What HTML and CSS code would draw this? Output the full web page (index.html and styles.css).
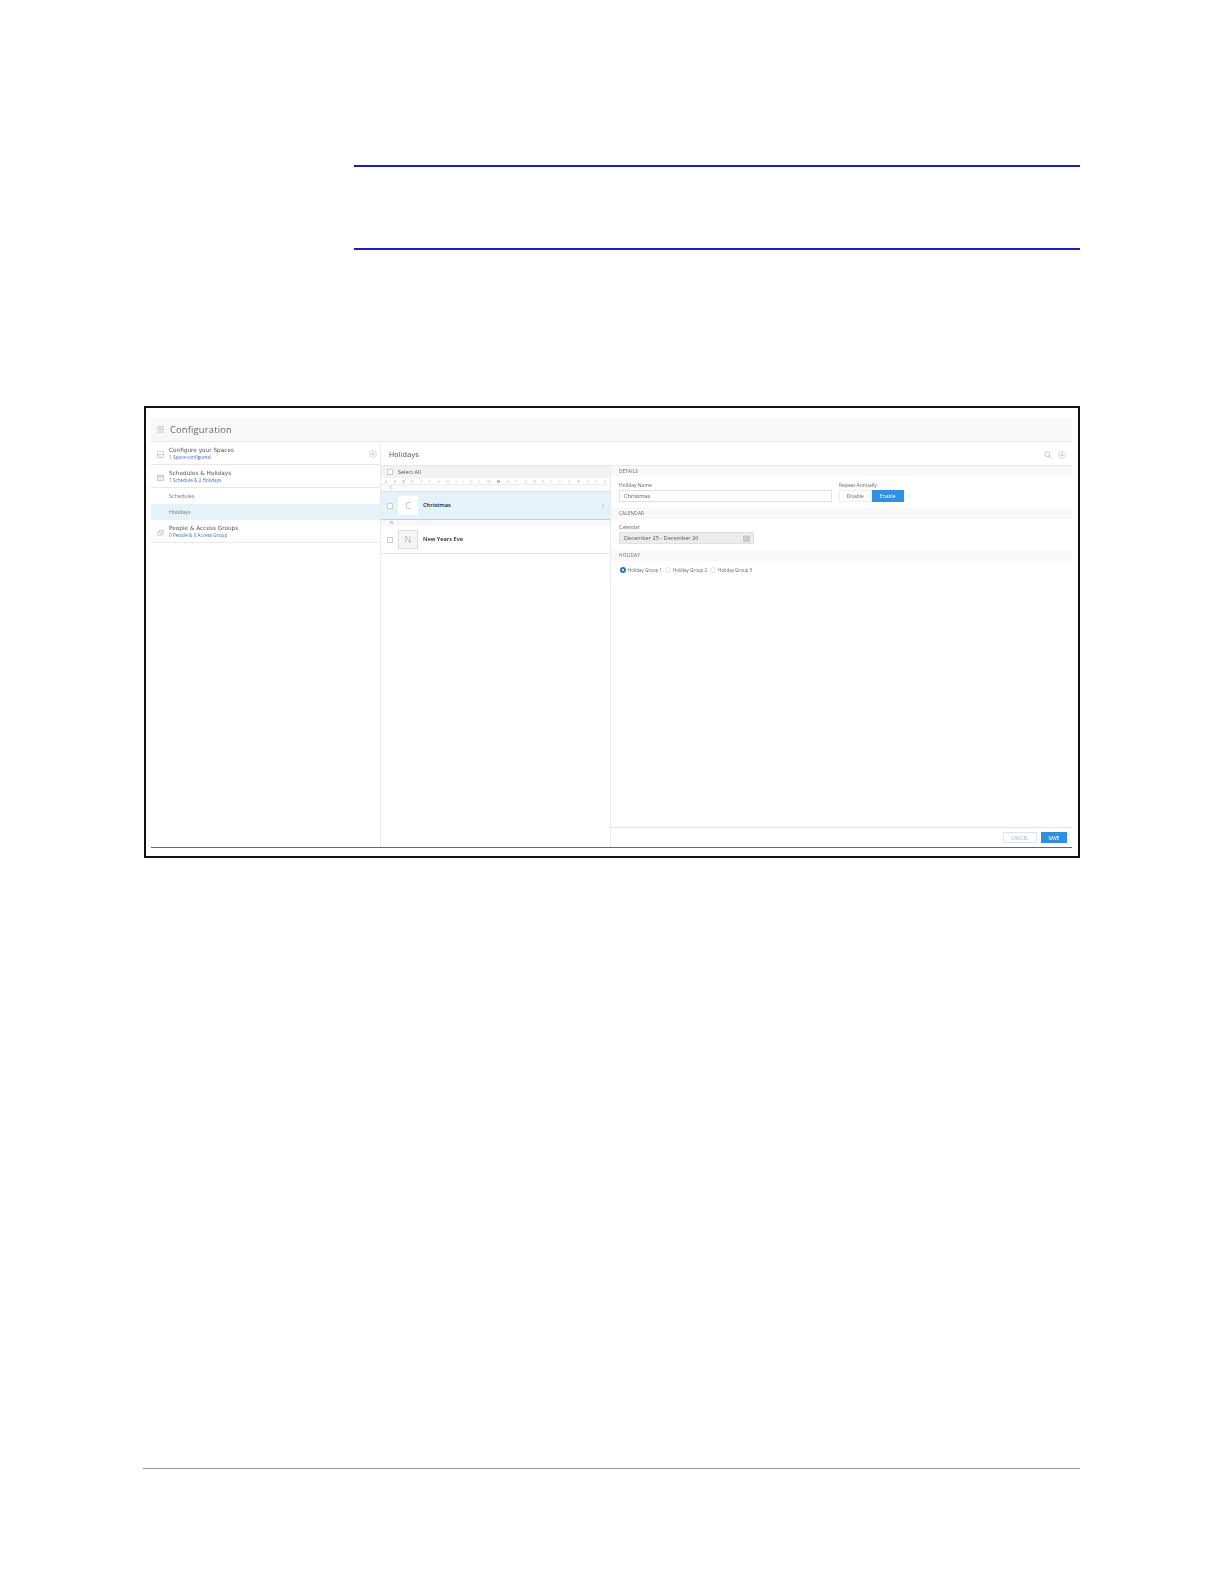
FILE: index.html
```html
<!DOCTYPE html>
<html lang="en">
<head>
<meta charset="utf-8">
<title>Holidays configuration</title>
<link rel="stylesheet" href="styles.css">
</head>
<body>
<div class="note"></div>
<figure class="shot">
  <div class="app">
    <header class="title-bar">
      <svg class="menu-ico" viewBox="0 0 8 8"><path d="M0 1h8M0 4h8M0 7h8" stroke="#ccc" stroke-width="1.6"/></svg>
      <span>Configuration</span>
    </header>
    <div class="columns">
      <nav class="side">
        <div class="nav-item">
          <svg class="nav-ico" viewBox="0 0 10 10"><path d="M.5.5h9v9h-9zM.5 5h4v4.500M6 5h3.500" fill="none" stroke="#aaa" stroke-width=".8"/></svg>
          <div class="nav-text"><b>Configure your Spaces</b><small>1 Space configured</small></div>
          <svg class="plus" viewBox="0 0 10 10"><circle cx="5" cy="5" r="4.400" fill="none" stroke="#bbb" stroke-width=".7"/><path d="M3 5h4M5 3v4" stroke="#999" stroke-width=".7"/></svg>
        </div>
        <div class="nav-item">
          <svg class="nav-ico" viewBox="0 0 10 10"><path d="M.5 1.500h9v8h-9z" fill="#eee" stroke="#aaa" stroke-width=".8"/><path d="M.5 3.500h9" stroke="#aaa" stroke-width=".8"/></svg>
          <div class="nav-text"><b>Schedules &amp; Holidays</b><small>1 Schedule &amp; 2 Holidays</small></div>
        </div>
        <div class="sub">Schedules</div>
        <div class="sub sub-active">Holidays</div>
        <div class="nav-item">
          <svg class="nav-ico" viewBox="0 0 10 10"><path d="M.5 9V4.500h6V9zM3 4.500V2h6v5.500H6.500" fill="none" stroke="#aaa" stroke-width=".8"/></svg>
          <div class="nav-text"><b>People &amp; Access Groups</b><small>0 People &amp; 0 Access Group</small></div>
        </div>
      </nav>
      <main class="main">
        <div class="main-head">
          <span>Holidays</span>
          <span class="tools">
            <svg class="tool" viewBox="0 0 10 10"><circle cx="4" cy="4" r="3" fill="none" stroke="#bbb" stroke-width="1"/><path d="M6.300 6.300 9.500 9.500" stroke="#bbb" stroke-width="1.200"/></svg>
            <svg class="tool" viewBox="0 0 10 10"><circle cx="5" cy="5" r="4.400" fill="none" stroke="#bbb" stroke-width=".7"/><path d="M3 5h4M5 3v4" stroke="#999" stroke-width=".7"/></svg>
          </span>
        </div>
        <div class="panes">
          <section class="list">
            <div class="select-all"><i class="box"></i><span>Select All</span></div>
            <div class="alpha"><span>A</span><span>B</span><span class="on">C</span><span>D</span><span>E</span><span>F</span><span>G</span><span>H</span><span>I</span><span>J</span><span>K</span><span>L</span><span>M</span><span class="on">N</span><span>O</span><span>P</span><span>Q</span><span>R</span><span>S</span><span>T</span><span>U</span><span>V</span><span>W</span><span>X</span><span>Y</span><span>Z</span></div>
            <div class="letter">C</div>
            <div class="row row-on"><i class="box"></i><span class="tile tile-on">C</span><b>Christmas</b>
              <svg class="chev" viewBox="0 0 5 8"><path d="M1 1l3 3-3 3" fill="none" stroke="#aaa" stroke-width=".8"/></svg>
            </div>
            <div class="letter letter-plain">N</div>
            <div class="row"><i class="box"></i><span class="tile">N</span><b>New Years Eve</b></div>
          </section>
          <section class="detail">
            <div class="detail-body">
              <h3 class="band band-first">DETAILS</h3>
              <div class="fields fields-first">
                <div class="field field-name"><label>Holiday Name</label><div class="input">Christmas</div></div>
                <div class="field"><label>Repeat Annually</label>
                  <div class="toggle"><span>Disable</span><span class="toggle-on">Enable</span></div>
                </div>
              </div>
              <h3 class="band">CALENDAR</h3>
              <div class="fields">
                <div class="field"><label>Calendar</label>
                  <div class="input input-date"><span>December 25 - December 26</span>
                    <svg class="cal" viewBox="0 0 10 10"><path d="M.5 1.500h9v8h-9z" fill="#ddd" stroke="#aaa" stroke-width=".8"/><path d="M.5 3.500h9M3.500 3.500v6M6.500 3.500v6M.5 6.500h9" stroke="#aaa" stroke-width=".6"/></svg>
                  </div>
                </div>
              </div>
              <h3 class="band">HOLIDAY</h3>
              <div class="radios">
                <span class="radio"><i class="dot dot-on"></i>Holiday Group 1</span>
                <span class="radio"><i class="dot"></i>Holiday Group 2</span>
                <span class="radio"><i class="dot"></i>Holiday Group 3</span>
              </div>
            </div>
            <div class="actions"><button class="btn">CANCEL</button><button class="btn btn-save">SAVE</button></div>
          </section>
        </div>
      </main>
    </div>
  </div>
</figure>
<div class="foot"></div>
</body>
</html>
```
FILE: styles.css
```css
* { box-sizing: border-box; }
html, body { margin: 0; padding: 0; background: #fff; }
body { height: 1584px; overflow: hidden; font-family: "Open Sans", "Liberation Sans", sans-serif; color: #555; position: relative; }
.note { margin: 165px 144px 0 354px; height: 85px; border-top: 2px solid #1a1ac8; border-bottom: 2px solid #1a1ac8; }
.shot { margin: 156px 144px 0 144px; height: 452px; border: 2px solid #111; padding: 10px 6px 0 5px; }
.app { height: 430px; border-bottom: 1px solid #666; display: flex; flex-direction: column; filter: blur(.4px); }
.title-bar { height: 24px; flex: none; background: #f8f8f8; border-bottom: 1px solid #e8e8e8; display: flex; align-items: center; gap: 6px; padding-left: 6px; font-size: 9.300px; letter-spacing: .2px; color: #666; }
.menu-ico { width: 7px; height: 7px; }
.columns { flex: 1; display: flex; min-height: 0; }
.side { width: 230px; flex: none; border-right: 1px solid #ebebeb; }
.nav-item { height: 23px; display: flex; align-items: center; padding: 2px 0 0 6px; border-bottom: 1px solid #e8e8e8; }
.nav-ico { width: 7px; height: 7px; flex: none; margin-right: 5px; }
.nav-text { flex: 1; line-height: 1; }
.nav-text b { display: block; font-weight: 400; font-size: 5.750px; color: #555; font-family: "DejaVu Sans", sans-serif; margin-bottom: 1px; }
.nav-text small { display: block; font-size: 4.700px; color: #3a6fd0; }
.plus { width: 8px; height: 8px; margin-right: 3px; }
.sub { height: 16px; line-height: 16px; padding-left: 18px; font-size: 5.400px; color: #777; }
.sub-active { background: #e6f2f9; }
.main { flex: 1; min-width: 0; display: flex; flex-direction: column; }
.main-head { height: 23px; flex: none; display: flex; align-items: center; justify-content: space-between; padding: 2px 6px 0 8px; font-size: 7px; color: #555; font-family: "DejaVu Sans", sans-serif; }
.tools { display: flex; gap: 6px; }
.tool { width: 8px; height: 8px; }
.panes { flex: 1; display: flex; min-height: 0; border-top: 1px solid #e8e8e8; }
.list { width: 230px; flex: none; border-right: 1px solid #ebebeb; }
.select-all { height: 12px; background: #f2f2f2; display: flex; align-items: center; gap: 5px; padding-left: 6px; font-size: 5.500px; color: #555; }
.box { display: block; width: 6px; height: 6px; background: #fff; border: 1px solid #ccc; flex: none; }
.alpha { height: 7px; display: flex; justify-content: space-between; align-items: center; padding: 0 4px; font-size: 3.800px; color: #bbb; border-bottom: 1px solid #eee; }
.alpha .on { color: #444; }
.letter { height: 6px; line-height: 6px; padding-left: 9px; font-size: 4px; color: #888; background: #fafafa; }
.letter-plain { height: 7px; background: #f7f7f7; border-top: 1px solid #bcd0de; }
.row { height: 28px; display: flex; align-items: center; padding-left: 6px; border-bottom: 1px solid #e4e4e4; position: relative; font-size: 5.700px; color: #222; }
.row b { margin: 0 0 2px 5px; font-weight: 600; }
.row-on { background: #e4f2f9; border-top: 1px solid #d8e4ea; border-bottom: none; }
.tile { width: 20px; height: 19px; margin-left: 5px; background: #f5f5f5; border: 1px solid #ddd; display: flex; align-items: center; justify-content: center; font-size: 9px; color: #bbb; }
.tile-on { background: #fff; border-color: #fff; }
.chev { width: 4px; height: 6px; position: absolute; right: 5px; top: 11px; }
.detail { flex: 1; min-width: 0; display: flex; flex-direction: column; }
.detail-body { flex: 1; }
.band { margin: 0; height: 11px; line-height: 10px; padding-left: 8px; background: #f8f8f8; font-size: 4.800px; font-weight: 400; color: #666; letter-spacing: .1px; }
.band-first { height: 10px; }
.fields { display: flex; gap: 7px; padding: 3px 0 0 8px; height: 31px; }
.fields-first { padding-top: 4px; height: 32px; }
.field-name { width: 213px; }
.field label { display: block; font-size: 5px; line-height: 8px; height: 10px; padding-top: 1px; color: #666; }
.input { height: 12px; width: 100%; border: 1px solid #e0e0e0; background: #fff; font-size: 5.600px; line-height: 10px; padding-left: 4px; color: #555; }
.input-date { width: 135px; background: #ececec; display: flex; align-items: center; justify-content: space-between; padding-right: 3px; }
.cal { width: 7px; height: 7px; }
.toggle { display: flex; width: 65px; height: 12px; font-size: 5px; line-height: 11px; text-align: center; color: #666; }
.toggle span { flex: 1; border: 1px solid #eee; }
.toggle .toggle-on { background: #2f8fe0; border-color: #2f8fe0; color: #fff; }
.radios { display: flex; gap: 3px; padding: 6px 0 0 9px; }
.radio { display: flex; align-items: center; gap: 2px; font-size: 4.500px; color: #666; }
.dot { display: block; width: 6px; height: 6px; border-radius: 50%; border: 1px solid #e2e2e2; background: #fff; }
.dot-on { border: 2px solid #2878b8; }
.actions { height: 20px; flex: none; border-top: 1px solid #e6e6e6; display: flex; justify-content: flex-end; align-items: center; gap: 4px; padding-right: 5px; }
.btn { height: 11px; width: 34px; padding: 0; border: 1px solid #d8e8f0; background: #fff; color: #aac; font: 4.500px "Open Sans", sans-serif; }
.btn-save { width: 26px; background: #2f8fe0; border-color: #2f8fe0; color: #fff; font-weight: 600; }
.foot { margin: 610px 144px 0 143px; height: 1px; background: #999; }
```
